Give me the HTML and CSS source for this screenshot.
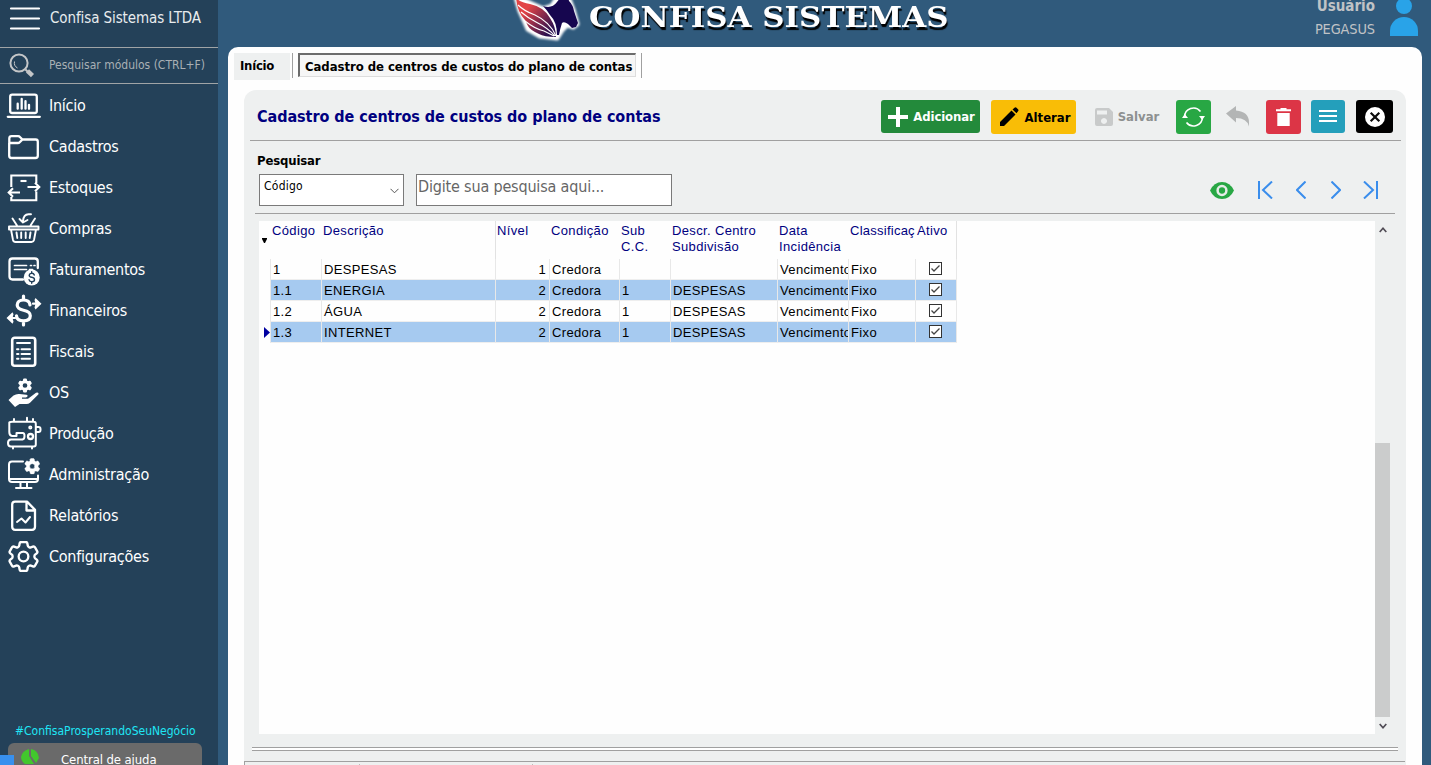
FILE: index.html
```html
<!DOCTYPE html>
<html lang="pt-BR">
<head>
<meta charset="utf-8">
<title>Confisa Sistemas</title>
<link rel="stylesheet" href="styles.css">
</head>
<body>
<svg width="0" height="0" class="defs"><defs>
<symbol id="cog" viewBox="2.4 2.4 19.2 19.2"><path fill-rule="evenodd" d="M9.594 3.94c.09-.542.56-.94 1.11-.94h2.593c.55 0 1.02.398 1.11.94l.213 1.281c.063.374.313.686.645.87.074.04.147.083.22.127.324.196.72.257 1.075.124l1.217-.456a1.125 1.125 0 011.37.49l1.296 2.247a1.125 1.125 0 01-.26 1.431l-1.003.827c-.293.24-.438.613-.431.992a6.759 6.759 0 010 .255c-.007.378.138.75.43.99l1.005.828c.424.35.534.954.26 1.43l-1.298 2.247a1.125 1.125 0 01-1.369.491l-1.217-.456c-.355-.133-.75-.072-1.076.124a6.57 6.57 0 01-.22.128c-.331.183-.581.495-.644.869l-.213 1.28c-.09.543-.56.941-1.11.941h-2.594c-.55 0-1.02-.398-1.11-.94l-.213-1.281c-.062-.374-.312-.686-.644-.87a6.52 6.52 0 01-.22-.127c-.325-.196-.72-.257-1.076-.124l-1.217.456a1.125 1.125 0 01-1.369-.49l-1.297-2.247a1.125 1.125 0 01.26-1.431l1.004-.827c.292-.24.437-.613.43-.992a6.932 6.932 0 010-.255c.007-.378-.138-.75-.43-.99l-1.004-.828a1.125 1.125 0 01-.26-1.43l1.297-2.247a1.125 1.125 0 011.37-.491l1.216.456c.356.133.751.072 1.076-.124.072-.044.146-.087.22-.128.332-.183.582-.495.644-.869l.214-1.281zM15 12a3 3 0 11-6 0 3 3 0 016 0z"/></symbol>
</defs></svg>
<div class="app">
  <aside class="sidebar">
    <div class="company"><svg class="burger" width="32" height="24" viewBox="0 0 32 24"><path d="M2 1.5h28M2 11.5h28M2 21.5h28"/></svg><span>Confisa Sistemas LTDA</span></div>
    <div class="module-search"><svg width="28" height="28" viewBox="0 0 28 28" fill="none" stroke="#c4c6c8"><circle cx="11" cy="11" r="8.600" stroke-width="2"/><path d="M6.500 9.500a6 6 0 0 0 3 6.500" stroke-width="1"/><path d="M17.500 17.500l2.500 2.500" stroke-width="2"/><path d="M19.500 18.800l5 4.800" stroke-width="4.400"/></svg><span>Pesquisar módulos (CTRL+F)</span></div>
    <nav class="menu">
      <a class="item"><svg viewBox="0 0 34 34"><rect x="3.200" y="5.700" width="26.600" height="18.300" rx="2"/><path d="M.8 27.800h32"/><path d="M10.700 14.700v5M14.700 10v9.700M18.500 12.200v7.500M22 15.800v4"/></svg><span>Início</span></a>
      <a class="item"><svg viewBox="0 0 34 34"><path d="M2.300 13V8.500q0-2.300 2.300-2.300H11q1.300 0 2.200 1l2.200 2.300h13.200q2.200 0 2.200 2.200v14q0 2.300-2.300 2.300h-24q-2.300 0-2.300-2.300V13h8.500q1.300 0 2-.8l2.600-2.600"/></svg><span>Cadastros</span></a>
      <a class="item"><svg viewBox="0 0 34 34" class="thin"><path d="M4.300 16V4.500h25V12M4.300 26v3.200h25V20.500"/><path d="M13.500 10h6"/><path d="M20.500 16h11.300M28 11.800l4.300 4.200-4.300 4.200M13 21.500H1.700M6 17.300l-4.300 4.200L6 25.800"/></svg><span>Estoques</span></a>
      <a class="item"><svg viewBox="0 0 34 34"><path class="w18" d="M2 14.500h29.500v3H2zM4 17.500l2 10.500q.5 2 2.500 2h16q2 0 2.500-2l2-10.500M5.500 6.500l4.500 7M28 6.500l-4.500 7M9.500 20.500l.8 5.500M14.200 20.500v5.500M18.700 20.500v5.500M23.500 20.500l-.8 5.500M24 2.300h-2.500q-5 0-5.500 7M12.500 7l3.500 3.500L20.500 8"/></svg><span>Compras</span></a>
      <a class="item"><svg viewBox="0 0 34 34"><path d="M16 26.500H5.500q-3 0-3-3V8.500q0-3 3-3h22.300q3 0 3 3V15"/><path class="w17" d="M7.500 12.500h12M23.500 12.500h1M27 12.500h1M7.500 16.500h12M22.500 16.500h3"/><circle cx="24.700" cy="24.500" r="8" fill="#fff" stroke="none"/><path d="M27.300 22q-.5-1.800-2.600-1.800t-2.500 2q0 1.700 2.600 2.100 2.700.5 2.700 2.400t-2.700 2q-2.300 0-2.700-1.900M24.700 18.700v1.500M24.700 28.700v1.500" stroke="#23405a" stroke-width="1.400"/></svg><span>Faturamentos</span></a>
      <a class="item"><svg viewBox="0 0 34 34"><path stroke-width="3.200" d="M23 11q-.5-5-6.500-5t-6.300 5q0 4 6.300 5.300 6.800 1.300 6.800 5.500 0 5-6.800 5t-7-5M16.500 2v4M16.500 27v4"/><path stroke-width="2.200" d="M26 9.700h5M4 24h4"/><path fill="#fff" stroke="none" d="M28.500 4l6 5.700-6 5.700-1-2 1-3.700-1-3.700zM5.500 18.300l-6 5.700 6 5.700 1-2-1-3.700 1-3.700z"/></svg><span>Financeiros</span></a>
      <a class="item"><svg viewBox="0 0 34 34"><rect x="5.200" y="2.700" width="23" height="28" rx="2.500" stroke-width="2.600"/><path class="w18" d="M10 8h13M10 14.300h1.500M14.500 14.300H23M10 19h1.500M14.500 19H23M10 23.800h1.500M14.500 23.800H23"/></svg><span>Fiscais</span></a>
      <a class="item"><svg viewBox="0 0 34 34" class="solid"><use href="#cog" x="10.500" y="2" width="15" height="15"/><path d="M1.500 24l5-4.500q3-2 6-1.500l7 .8q2.500 1-.5 2.700h-4v1.200h6l8-6q3-1 2.500 1.500l-8.500 8.500q-1.500 1.300-3.500 1.300h-7L8 31z"/></svg><span>OS</span></a>
      <a class="item"><svg viewBox="0 0 34 34"><path d="M2.300 5.500q0-.7 3-.7h21.500q2 0 2 2v20.700q0 2-2 2H4q-3 0-3-3.500t3-3.500h11.500q2-.3 2-3.500t-2-3H9.500v3H5q-2.700-.5-2.700-4zM7 4.500V2M20 4.500V.8M26 4.500V2M29 10h2.500q2 0 2 2v1q0 2-2 2H29M6 30v1.500M25 30v1.500" class="w20"/><circle cx="23.300" cy="10.500" r=".9"/><circle cx="23.500" cy="19.500" r="2.500"/></svg><span>Produção</span></a>
      <a class="item"><svg viewBox="0 0 34 34"><path class="w20" d="M16 3.500H5q-3 0-3 3V21q0 3 3 3h23q3 0 3-3v-3.500M2.500 21h28M13.500 24v5.500M20 24v5.500M9 30h15.500"/><use href="#cog" x="17" y="0" width="16.500" height="16.500" fill="#fff" stroke="#fff" stroke-width=".5"/></svg><span>Administração</span></a>
      <a class="item"><svg viewBox="0 0 34 34"><path d="M8 2.600h12l8 8.200v17q0 3-3 3H8.200q-3 0-3-3V5.600q0-3 2.800-3zM19.500 3v8.500H28" /><path class="w20" d="M10 23l4.500-3.500 4 4L23 18"/></svg><span>Relatórios</span></a>
      <a class="item"><svg viewBox="0 0 34 34"><use href="#cog" x="1" y="1" width="31" height="31" stroke-width="1.450"/></svg><span>Configurações</span></a>
    </nav>
    <div class="slogan">#ConfisaProsperandoSeuNegócio</div>
    <div class="help"><svg width="18" height="18" viewBox="0 0 18 18" fill="#42c72d"><path d="M8 0v7l5 8H4Q0 12 0 8 1 2 8 0zM10 0q7 1 8 9l-3 5-5-7z"/></svg><span>Central de ajuda</span></div>
    <div class="corner"></div>
  </aside>
  <main class="main">
    <header class="topbar">
      <div class="brand">
        <svg class="pegasus" width="74" height="46" viewBox="0 0 74 46"><defs><linearGradient id="wing" x1="0" y1="0" x2="1" y2=".9"><stop offset=".3" stop-color="#e24446"/><stop offset=".9" stop-color="#2b1050"/></linearGradient><filter id="halo" x="-20%" y="-20%" width="140%" height="140%"><feGaussianBlur stdDeviation="1.300"/></filter></defs>
        <path d="M6-3l4 14 5 11 3 7 12 7 17 2 5-8 5-5 6 2 4-3-4-14-5-13H48l-6 9-9 3z" fill="#fff" stroke="#fff" stroke-width="5" stroke-linejoin="round" filter="url(#halo)"/>
        <path d="M6-3Q8 2 20 4q14 3 20 14 6 9 6 19-12 0-17-3-9-4-11-8l-3-6Q7 12 6-3z" fill="url(#wing)"/>
        <path d="M8 5q6 6 17 10 15 7 21 21M11 12q7 6 15 10 12 6 19 14M15 21q10 8 19 10l10 5" fill="none" stroke="#fff" stroke-width="1.100"/>
        <path d="M33 6q9 3 14-4l4-5h7l1 4q4 4 5 10l4 12-2 4-4 1-4-4q-4-3-6-1-2 6-3 12h-2q0-13-7-20-3-5-7-9z" fill="#16064f"/></svg>
        <span>CONFISA SISTEMAS</span>
      </div>
      <div class="user"><div><b>Usuário</b><span>PEGASUS</span></div><svg width="28" height="41" viewBox="0 0 28 41" fill="#29a3e8"><circle cx="14" cy="11" r="8"/><path d="M0 41v-5a14 14 0 0 1 28 0v5z"/></svg></div>
    </header>
    <section class="workspace">
      <div class="tabs"><div class="tab home">Início</div><i></i><div class="tab active">Cadastro de centros de custos do plano de contas</div><i></i></div>
      <div class="card">
        <div class="card-head">
          <h1>Cadastro de centros de custos do plano de contas</h1>
          <div class="actions">
            <button class="btn add"><svg width="20" height="20" viewBox="0 0 20 20"><path d="M10 0v20M0 10h20" stroke="#fff" stroke-width="4"/></svg><span>Adicionar</span></button>
            <button class="btn edit"><svg width="20" height="20" viewBox="0 0 20 20"><path d="M1 19v-4L12.500 3.500l4 4L5 19zM13.500 2.500L15.500.7q1-.8 2 0L19 2.300q1 1 0 2L17.500 6.200z"/></svg><span>Alterar</span></button>
            <button class="btn save"><svg width="18" height="18" viewBox="0 0 18 18"><path fill="#c8caca" fill-rule="evenodd" d="M2 0h12l4 4v12q0 2-2 2H2q-2 0-2-2V2Q0 0 2 0zM2 2.500v4h10v-4zM9 10a3 3 0 1 0 .01 0z"/></svg><span>Salvar</span></button>
            <button class="btn refresh"><svg width="23" height="20" viewBox="0 0 23 20" fill="none" stroke="#fff" stroke-width="1.600"><path d="M2.600 10A8.900 8.900 0 0 1 18.500 4.500M20.400 10A8.900 8.900 0 0 1 4.500 15.500"/><path fill="#fff" stroke="none" d="M0 11l2.800-4L6 11zM17 9l3.200 4L23 9z"/></svg></button>
            <button class="btn undo"><svg width="24" height="22" viewBox="0 0 24 22"><path fill="#b3b5b5" d="M0 7.500L10 0v4.500q13 1 13 12v4q-2-8.500-13-8.500v4.500z"/></svg></button>
            <button class="btn trash"><svg width="15" height="19" viewBox="0 0 15 19"><path fill="#fff" d="M0 1.200h4.500V0h6v1.200H15v2.100H0zM1.300 5h12.400v13H1.300z"/></svg></button>
            <button class="btn list"><svg width="18" height="13" viewBox="0 0 18 13"><path d="M0 1h18M0 6h18M0 11h18" stroke="#fff" stroke-width="2"/></svg></button>
            <button class="btn close"><svg width="20" height="20" viewBox="0 0 20 20"><circle cx="10" cy="10" r="10" fill="#fff"/><path d="M5.700 5.700l8.600 8.600M14.300 5.700l-8.600 8.600" stroke="#0b0b0b" stroke-width="2.200"/></svg></button>
          </div>
        </div>
        <div class="filter">
          <div class="filter-left"><label>Pesquisar</label>
            <div class="fields"><div class="combo"><span>Código</span><svg width="9" height="6" viewBox="0 0 9 6"><path d="M.5.8l4 4 4-4" fill="none" stroke="#555"/></svg></div><div class="query">Digite sua pesquisa aqui...</div></div></div>
          <div class="pager">
            <svg class="eye" width="24" height="17" viewBox="0 0 24 17"><path fill="#28a744" d="M0 8.500Q4 0 12 0t12 8.500Q20 17 12 17T0 8.500z"/><circle cx="12" cy="8.500" r="4.400" fill="none" stroke="#e6ece8" stroke-width="2.500"/></svg>
            <svg width="15" height="18" viewBox="0 0 15 18"><path d="M1 0v18M14 .5L5 9l9 8.500"/></svg>
            <svg width="10" height="18" viewBox="0 0 10 18"><path d="M9.500.5L1 9l8.500 8.500"/></svg>
            <svg width="10" height="18" viewBox="0 0 10 18"><path d="M.5.500L9 9 .5 17.500"/></svg>
            <svg width="15" height="18" viewBox="0 0 15 18"><path d="M14 0v18M1 .5L10 9l-9 8.500"/></svg>
          </div>
        </div>
        <div class="sheet">
          <div class="grid">
            <div class="row head"><div class="mark"><svg width="5" height="5" viewBox="0 0 5 5"><path d="M0 0h5v1L3 5H2L0 1z"/></svg></div><div>Código</div><div class="desc">Descrição</div><div>Nível</div><div>Condição</div><div>Sub C.C.</div><div>Descr. Centro Subdivisão</div><div>Data Incidência</div><div>Classificaç</div><div>Ativo</div></div>
            <div class="row"><div class="mark"></div><div>1</div><div>DESPESAS</div><div>1</div><div>Credora</div><div></div><div></div><div>Vencimento</div><div>Fixo</div><div><i class="check"><svg width="9" height="7" viewBox="0 0 9 7"><path d="M.5 3.500L3 6 8.500.5"/></svg></i></div></div>
            <div class="row blue"><div class="mark"></div><div>1.1</div><div>ENERGIA</div><div>2</div><div>Credora</div><div>1</div><div>DESPESAS</div><div>Vencimento</div><div>Fixo</div><div><i class="check"><svg width="9" height="7" viewBox="0 0 9 7"><path d="M.5 3.500L3 6 8.500.5"/></svg></i></div></div>
            <div class="row"><div class="mark"></div><div>1.2</div><div>ÁGUA</div><div>2</div><div>Credora</div><div>1</div><div>DESPESAS</div><div>Vencimento</div><div>Fixo</div><div><i class="check"><svg width="9" height="7" viewBox="0 0 9 7"><path d="M.5 3.500L3 6 8.500.5"/></svg></i></div></div>
            <div class="row blue"><div class="mark"><svg width="6" height="11" viewBox="0 0 6 11"><path fill="#0000a0" d="M0 0l6 5.500L0 11z"/></svg></div><div>1.3</div><div>INTERNET</div><div>2</div><div>Credora</div><div>1</div><div>DESPESAS</div><div>Vencimento</div><div>Fixo</div><div><i class="check"><svg width="9" height="7" viewBox="0 0 9 7"><path d="M.5 3.500L3 6 8.500.5"/></svg></i></div></div>
          </div>
          <div class="scroll"><svg width="8" height="6" viewBox="0 0 8 6"><path d="M.7 5L4 1.300 7.300 5"/></svg><div class="thumb"></div><svg width="8" height="6" viewBox="0 0 8 6"><path d="M.7 1L4 4.700 7.300 1"/></svg></div>
        </div>
        <div class="rules"></div>
        <div class="status"><i></i><i></i></div>
      </div>
    </section>
  </main>
</div>
</body>
</html>
```
FILE: styles.css
```css
* { box-sizing: border-box; }
body { margin: 0; width: 1431px; height: 765px; overflow: hidden; background: #305a7c; font-family: "DejaVu Sans Condensed", "DejaVu Sans", sans-serif; font-stretch: condensed; color: #000; white-space: nowrap; }
svg { display: block; flex: none; }
.defs { position: absolute; }
.app { display: flex; height: 765px; }

.sidebar { position: relative; width: 218px; height: 765px; background: #244159; display: flex; flex-direction: column; color: #fff; overflow: hidden; }
.company { height: 48px; padding: 7px 0 0 9px; display: flex; align-items: flex-start; border-bottom: 1px solid #a0a4a6; font-size: 15px; letter-spacing: -.1px; color: #e8ecee; }
.burger { stroke: #fff; stroke-width: 2.2; stroke-linecap: round; }
.company span { margin: 3px 0 0 9px; line-height: 17px; }
.module-search { height: 36px; padding: 4px 0 0 8px; display: flex; border-bottom: 1px solid #a0a4a6; font-size: 12px; color: #a9b0b5; }
.module-search span { margin: 6px 0 0 13px; line-height: 15px; }
.menu { display: flex; flex-direction: column; padding-top: 1px; }
.item { height: 41px; padding-left: 7px; display: flex; align-items: center; font-size: 16px; letter-spacing: -.25px; }
.item svg { width: 34px; height: 34px; margin-right: 8px; fill: none; stroke: #fff; stroke-width: 2.3; stroke-linecap: round; stroke-linejoin: round; overflow: visible; }
.item span { line-height: 20px; }
.item .thin { stroke-linecap: butt; stroke-linejoin: miter; stroke-width: 2.1; }
.item .solid { fill: #fff; stroke: none; }
.w17 { stroke-width: 1.700; }
.w18 { stroke-width: 1.900; }
.w20 { stroke-width: 2; }
.slogan { margin: auto 0 0 15px; height: 20px; font-size: 12px; line-height: 16px; color: #1fe6f5; }
.help { width: 194px; height: 22px; margin-left: 8px; padding: 6px 0 0 13px; display: flex; background: #6a6a6a; border-radius: 6px 6px 0 0; font-size: 13px; letter-spacing: -.1px; }
.help span { margin: 3px 0 0 22px; line-height: 16px; }
.corner { position: absolute; left: 0; bottom: 0; width: 14px; height: 10px; background: #3890ee; }

.main { flex: 1; display: flex; flex-direction: column; min-width: 0; }
.topbar { height: 47px; display: flex; justify-content: space-between; padding: 0 13px 0 292px; }
.brand { display: flex; color: #fff; font: bold 27px/36px "DejaVu Serif", serif; text-shadow: 1px 3px 1px #000; }
.brand span { margin-left: 5px; transform: scaleX(1.145); transform-origin: 0 0; height: 36px; }
.pegasus { overflow: visible; }
.user { display: flex; gap: 15px; color: #c0c3c6; font-size: 14px; text-align: right; }
.user div { display: flex; flex-direction: column; }
.user b { line-height: 18px; margin-top: -3px; font-size: 15px; }
.user span { margin-top: 5px; line-height: 18px; font-size: 14.4px; letter-spacing: -.1px; }
.user svg { margin-top: -5px; }

.workspace { margin: 0 9px 0 10px; flex: 1; background: #fefefe; border-radius: 10px 10px 0 0; padding: 6px 16px 0 6px; display: flex; flex-direction: column; }
.tabs { display: flex; height: 27px; font-size: 13px; font-weight: bold; }
.tabs i { width: 1px; height: 25px; background: #a0a0a0; }
.home { width: 56px; height: 27px; background: #eef0f0; padding: 5px 0 0 6px; line-height: 15px; margin-right: 2px; letter-spacing: -.25px; }
.active { width: 338px; height: 24px; margin: 0 5px; padding: 3px 0 0 5px; line-height: 17px; letter-spacing: -.05px; background: #f6f6f6; border: 1px solid #ddd; border-top: 2px solid #6c6c6c; border-left: 2px solid #6c6c6c; }
.card { margin: 10px 0 0 10px; flex: 1; background: #eef0f0; border-radius: 12px 12px 0 0; display: flex; flex-direction: column; }
.card-head { height: 51px; margin: 0 5px 0 6px; padding: 10px 8px 0 7px; border-bottom: 1px solid #a0a0a0; display: flex; justify-content: space-between; }
h1 { margin: 6px 0 0; font-size: 16px; letter-spacing: -.05px; line-height: 22px; color: #000080; }
.actions { display: flex; }
.btn { height: 33px; border: 0; border-radius: 3px; padding: 0; display: flex; align-items: center; justify-content: center; font: bold 13px "DejaVu Sans Condensed", "DejaVu Sans", sans-serif; gap: 5px; }
.add { width: 99px; background: #238a3b; color: #fff; padding-left: 2px; letter-spacing: -.1px; }
.edit { width: 85px; height: 34px; margin-left: 11px; background: #f9bd06; gap: 5px; padding-left: 3px; }
.save { width: 70px; margin-left: 16px; background: none; color: #8d9090; }
.refresh { width: 35px; height: 34px; margin-left: 14px; background: #28a744; }
.undo { width: 24px; height: 28px; margin: 3px 0 0 15px; background: none; }
.trash { width: 35px; height: 34px; margin-left: 16px; background: #dc3546; }
.list { width: 34px; margin-left: 10px; background: #249fbb; }
.close { width: 37px; margin-left: 11px; background: #000; padding-left: 1px; }
.filter { height: 73px; margin: 0 11px; padding: 12px 17px 0 2px; border-bottom: 1px solid #a0a0a0; display: flex; justify-content: space-between; }
.filter label { display: block; font-size: 13px; font-weight: bold; line-height: 16px; letter-spacing: -.15px; }
.fields { display: flex; gap: 12px; margin: 5px 0 0 2px; }
.combo { width: 145px; height: 32px; padding: 3px 4px 0 4px; border: 1px solid #7a7a7a; background: #fff; display: flex; justify-content: space-between; font-size: 12px; letter-spacing: .25px; line-height: 16px; }
.combo svg { margin-top: 10px; }
.query { width: 256px; height: 32px; padding: 2px 0 0 1px; border: 1px solid #7a7a7a; background: #fff; color: #666; font-size: 16px; letter-spacing: -.17px; line-height: 20px; }
.pager { display: flex; align-items: center; height: 18px; margin-top: 28px; fill: none; stroke: #3a8dec; stroke-width: 2; }
.eye { stroke: none; margin-right: 24px; }
.eye + svg { margin-right: 23px; }
.eye + svg + svg { margin-right: 25px; }
.eye + svg + svg + svg { margin-right: 22px; }

.sheet { margin: 7px 16px 0 15px; height: 513px; display: flex; }
.grid { flex: 1; background: #fefefe; font-family: "Liberation Sans", sans-serif; font-stretch: normal; font-size: 13px; letter-spacing: .35px; }
.row { display: grid; grid-template-columns: 12px 51px 174px 54px 70px 51px 107px 71px 67px 41px; height: 21px; line-height: 22px; }
.row > div { height: 21px; padding-left: 2px; overflow: hidden; border-right: 1px solid #e8e8e8; border-bottom: 1px solid #eee; }
.row .mark { background: #fefefe; border-bottom: 0; display: flex; align-items: center; padding-left: 5px; }
.row > div:nth-child(4) { text-align: right; padding-right: 3px; }
.blue > div { background: #a6caf0; }
.head { height: 38px; color: #000080; line-height: 16px; padding-top: 2px; }
.head > div { height: 36px; border-color: transparent; white-space: normal; padding-left: 1px; border-bottom: 0; margin-right: -1px; }
.head > .desc, .head > div:last-child { height: 38px; border-color: #e2e2e2; margin: -2px 0 0; padding-top: 2px; }
.head > div:nth-child(4) { text-align: left; padding: 0 0 0 1px; }
.head > .mark { height: 34px; padding-left: 3px; }
.head > div:nth-child(9) { white-space: nowrap; margin: 0; padding-left: 1px; letter-spacing: .25px; }
.row > div:last-child { padding-left: 13px; }
.head > div:last-child { padding-left: 1px; }
.check { display: flex; align-items: center; justify-content: center; width: 13px; height: 13px; margin-top: 3px; background: #fff; border: 1px solid #333; }
.check svg { fill: none; stroke: #444; stroke-width: 1.300; }
.scroll { width: 15px; display: flex; flex-direction: column; align-items: center; padding: 6px 0 5px; }
.scroll svg { fill: none; stroke: #504c55; stroke-width: 1.700; }
.thumb { width: 15px; height: 274px; background: #cbcccc; margin: auto 0 6px; }
.rules { margin: 13px 8px 0; height: 4px; border: solid #a0a0a0; border-width: 1px 0; background: #fff; flex: none; }
.status { margin: 10px 1px 0 0; height: 4px; border-top: 1px solid #a0a0a0; border-left: 1px solid #a0a0a0; display: flex; flex: none; padding: 2px 0 0 114px; gap: 172px; }
.status i { width: 1px; height: 2px; background: #bbb; }
```
